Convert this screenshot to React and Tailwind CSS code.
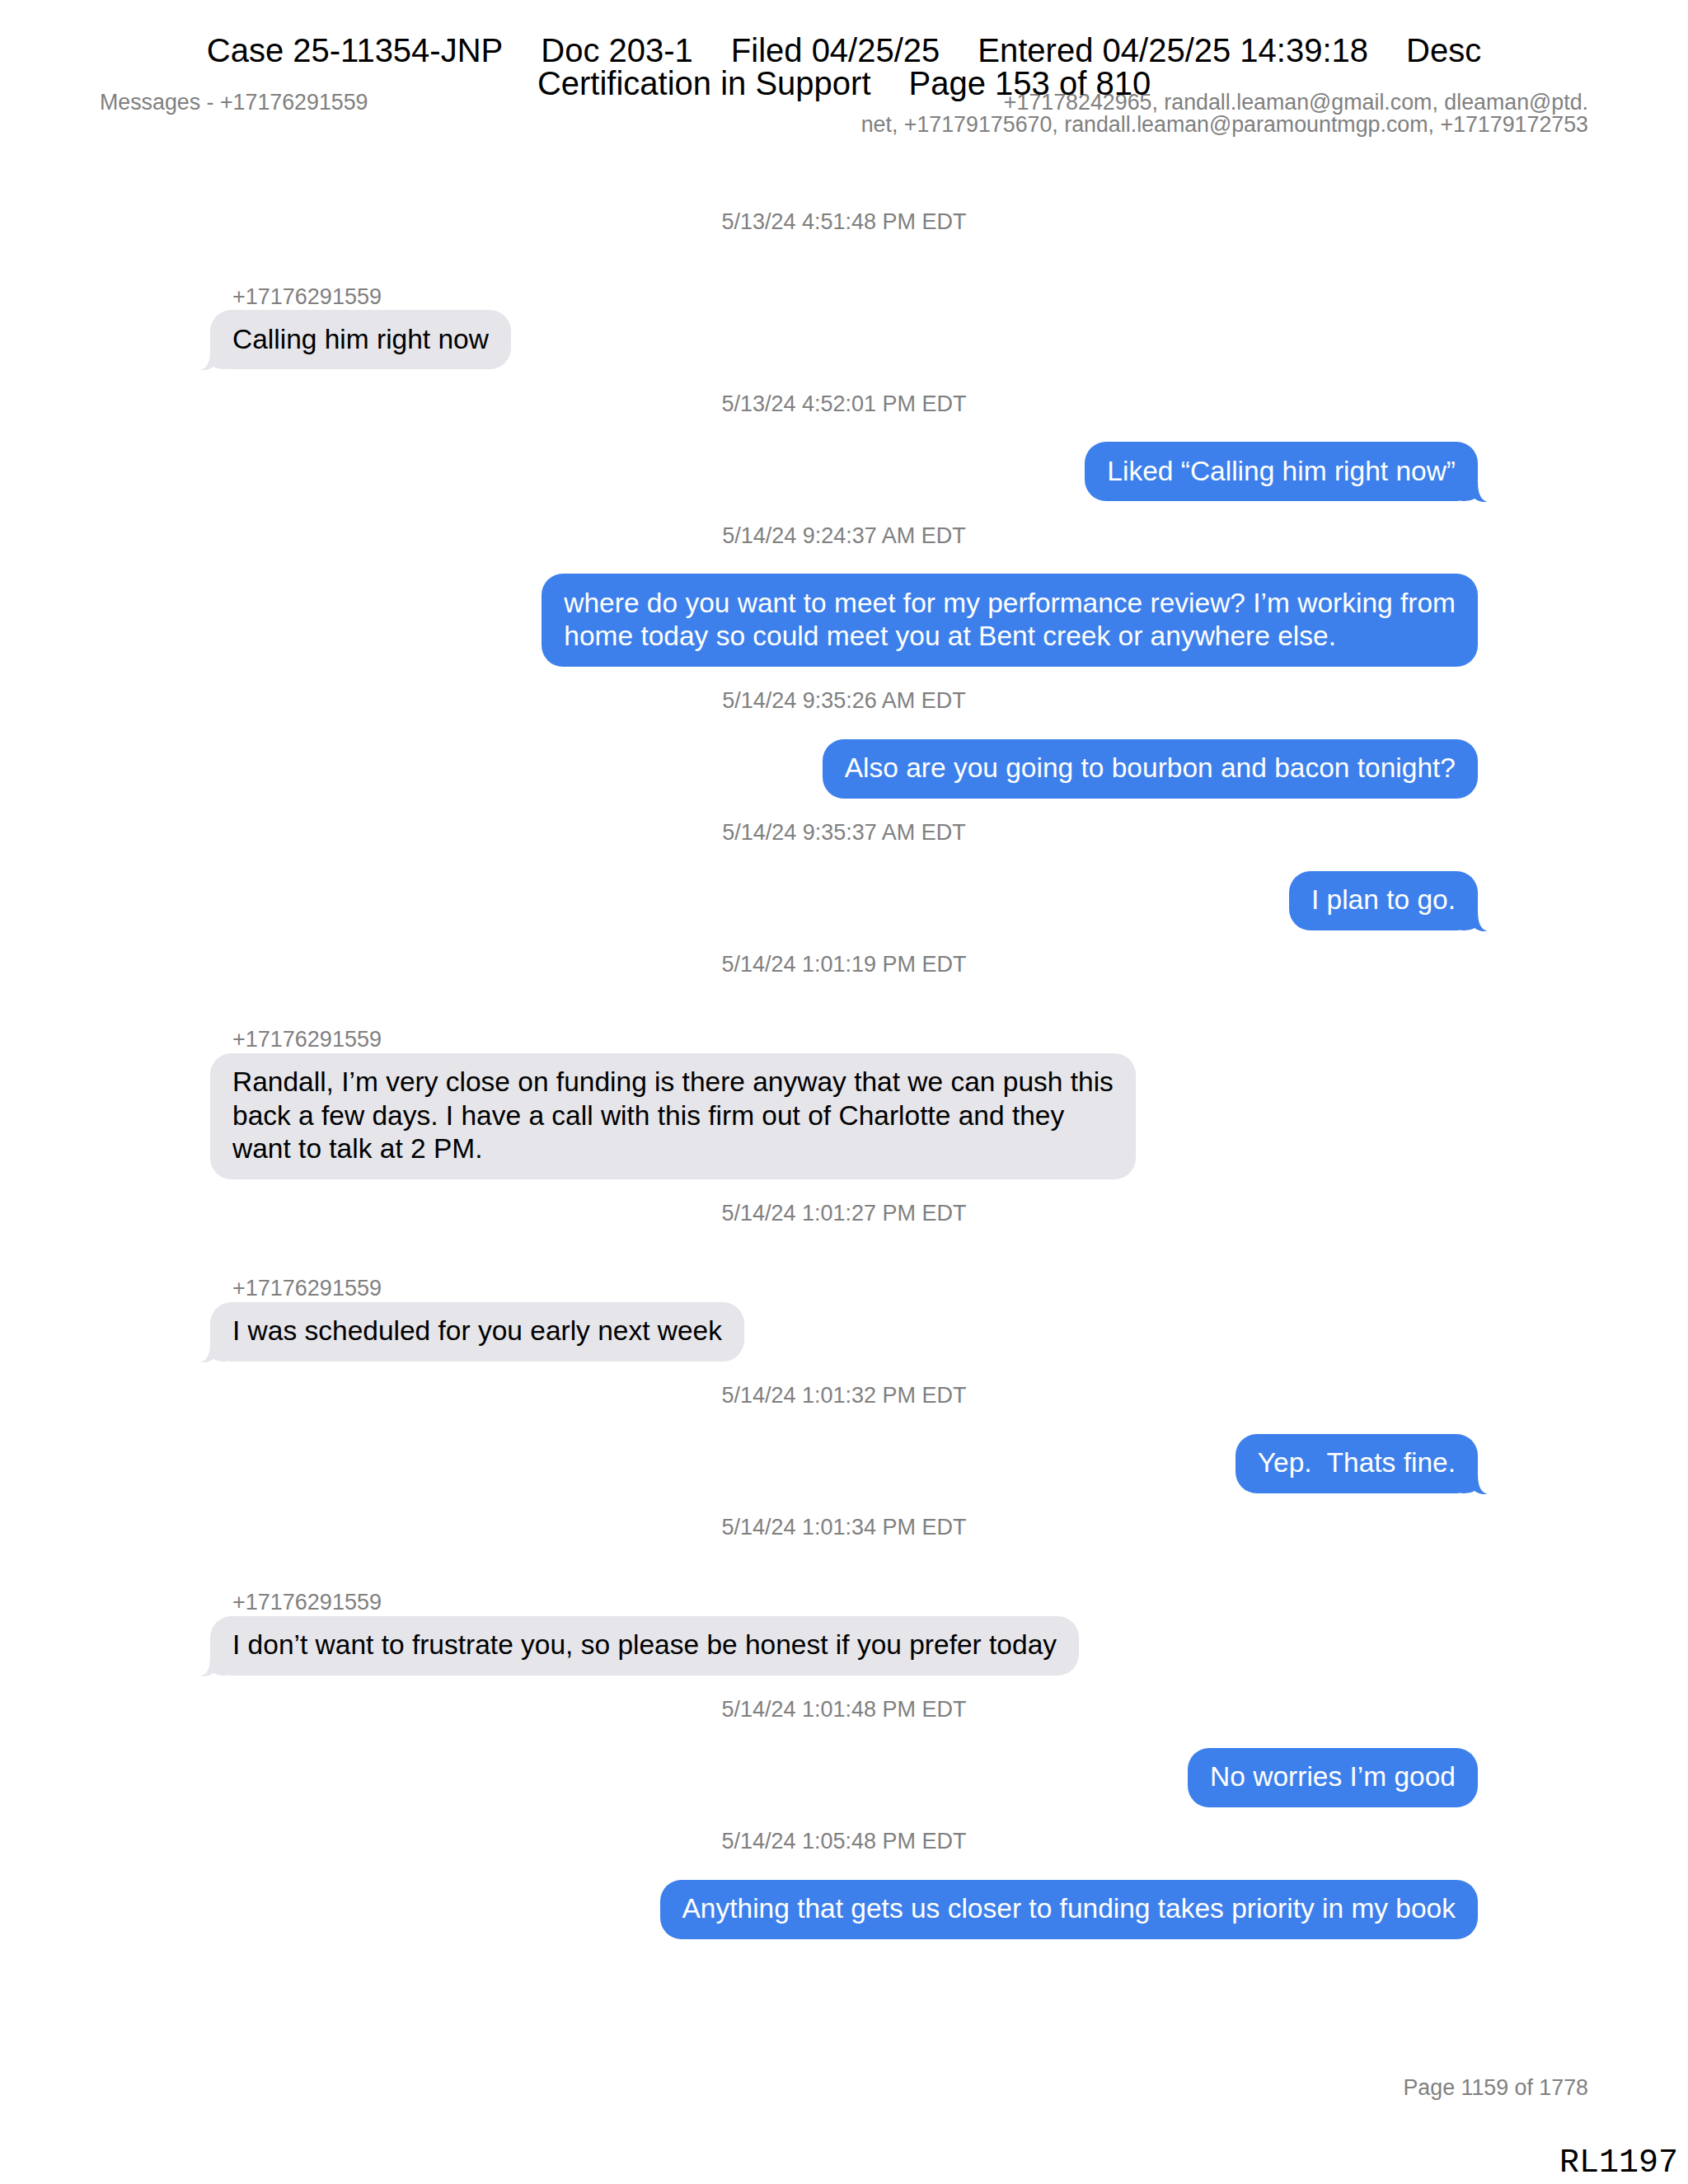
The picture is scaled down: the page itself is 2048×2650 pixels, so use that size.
import React from "react"

const LABEL = "+17176291559"

const messages = [
  { ts: "5/13/24 4:51:48 PM EDT", dir: "in", lines: ["Calling him right now"], tail: true },
  { ts: "5/13/24 4:52:01 PM EDT", dir: "out", lines: ["Liked “Calling him right now”"], tail: true },
  {
    ts: "5/14/24 9:24:37 AM EDT",
    dir: "out",
    lines: [
      "where do you want to meet for my performance review? I’m working from",
      "home today so could meet you at Bent creek or anywhere else.",
    ],
    tail: false,
  },
  { ts: "5/14/24 9:35:26 AM EDT", dir: "out", lines: ["Also are you going to bourbon and bacon tonight?"], tail: false },
  { ts: "5/14/24 9:35:37 AM EDT", dir: "out", lines: ["I plan to go."], tail: true },
  {
    ts: "5/14/24 1:01:19 PM EDT",
    dir: "in",
    lines: [
      "Randall, I’m very close on funding is there anyway that we can push this",
      "back a few days. I have a call with this firm out of Charlotte and they",
      "want to talk at 2 PM.",
    ],
    tail: false,
  },
  { ts: "5/14/24 1:01:27 PM EDT", dir: "in", lines: ["I was scheduled for you early next week"], tail: true },
  { ts: "5/14/24 1:01:32 PM EDT", dir: "out", lines: ["Yep.  Thats fine."], tail: true },
  {
    ts: "5/14/24 1:01:34 PM EDT",
    dir: "in",
    lines: ["I don’t want to frustrate you, so please be honest if you prefer today"],
    tail: true,
  },
  { ts: "5/14/24 1:01:48 PM EDT", dir: "out", lines: ["No worries I’m good"], tail: false },
  {
    ts: "5/14/24 1:05:48 PM EDT",
    dir: "out",
    lines: ["Anything that gets us closer to funding takes priority in my book"],
    tail: false,
  },
]

// bubble tail, drawn for the right side and mirrored for incoming
function Tail({ side, color }) {
  const pos = side === "right" ? "right-[-12px]" : "left-[-12px]"
  return (
    <svg className={`absolute bottom-[-2px] ${pos}`} width="34" height="30" viewBox="0 0 34 30">
      <g transform={side === "left" ? "translate(34 0) scale(-1 1)" : undefined}>
        <path
          d="M2 4 L22 4 C22 20 26 27 34 29 C28 29.5 23 28.5 18 25 C14 27.5 8 28 2 28 Z"
          fill={color}
        />
      </g>
    </svg>
  )
}

function Bubble({ msg }) {
  const out = msg.dir === "out"
  return (
    <div
      className={`relative rounded-[26px] px-[27px] py-[15.75px] text-[33.5px] leading-[40.5px] whitespace-pre ${
        out ? "bg-[#3d80ec] text-white" : "bg-[#e5e5ea] text-black"
      }`}
    >
      {msg.lines.map((l, i) => (
        <div key={i}>{l}</div>
      ))}
      {msg.tail && <Tail side={out ? "right" : "left"} color={out ? "#3d80ec" : "#e5e5ea"} />}
    </div>
  )
}

export default function App() {
  return (
    <div className="relative min-h-[2650px] bg-white font-['Liberation_Sans',Arial,sans-serif] text-black">
      {/* court filing stamp, printed over the page */}
      <div className="absolute top-[41px] left-0 right-0 flex flex-col items-center text-[40px] leading-[40px] whitespace-nowrap">
        <div className="flex gap-[46px]">
          <span>Case 25-11354-JNP</span>
          <span>Doc 203-1</span>
          <span>Filed 04/25/25</span>
          <span>Entered 04/25/25 14:39:18</span>
          <span>Desc</span>
        </div>
        <div className="flex gap-[46px]">
          <span>Certification in Support</span>
          <span>Page 153 of 810</span>
        </div>
      </div>

      <div className="flex justify-between items-start pt-[104px] pl-[121px] pr-[121px] text-[26.8px] text-[#808080]">
        <div className="mt-[5px] leading-[30px]">Messages - +17176291559</div>
        <div className="mt-[7px] text-right leading-[27px]">
          +17178242965, randall.leaman@gmail.com, dleaman@ptd.
          <br />
          net, +17179175670, randall.leaman@paramountmgp.com, +17179172753
        </div>
      </div>

      <div className="mt-[88.5px] px-[255px] flex flex-col">
        {messages.map((m, i) => (
          <div key={i} className="flex flex-col">
            <div className={`${i > 0 ? "mt-[26.5px]" : ""} text-center text-[27px] leading-[30px] text-[#808080]`}>
              {m.ts}
            </div>
            {m.dir === "in" ? (
              <div className="flex flex-col items-start">
                <div className="mt-[61px] pl-[27px] text-[27px] leading-[30px] text-[#808080]">{LABEL}</div>
                <div className="mt-[1.5px]">
                  <Bubble msg={m} />
                </div>
              </div>
            ) : (
              <div className="mt-[31.5px] flex justify-end">
                <Bubble msg={m} />
              </div>
            )}
          </div>
        ))}
      </div>

      <div className="mt-[165.5px] pr-[121px] text-right text-[26.8px] leading-[30px] text-[#808080]">
        Page 1159 of 1778
      </div>
      <div className="mt-[57px] pr-[12px] text-right font-['Liberation_Mono',monospace] text-[40px] leading-[40px] text-black">
        RL1197
      </div>
    </div>
  )
}
